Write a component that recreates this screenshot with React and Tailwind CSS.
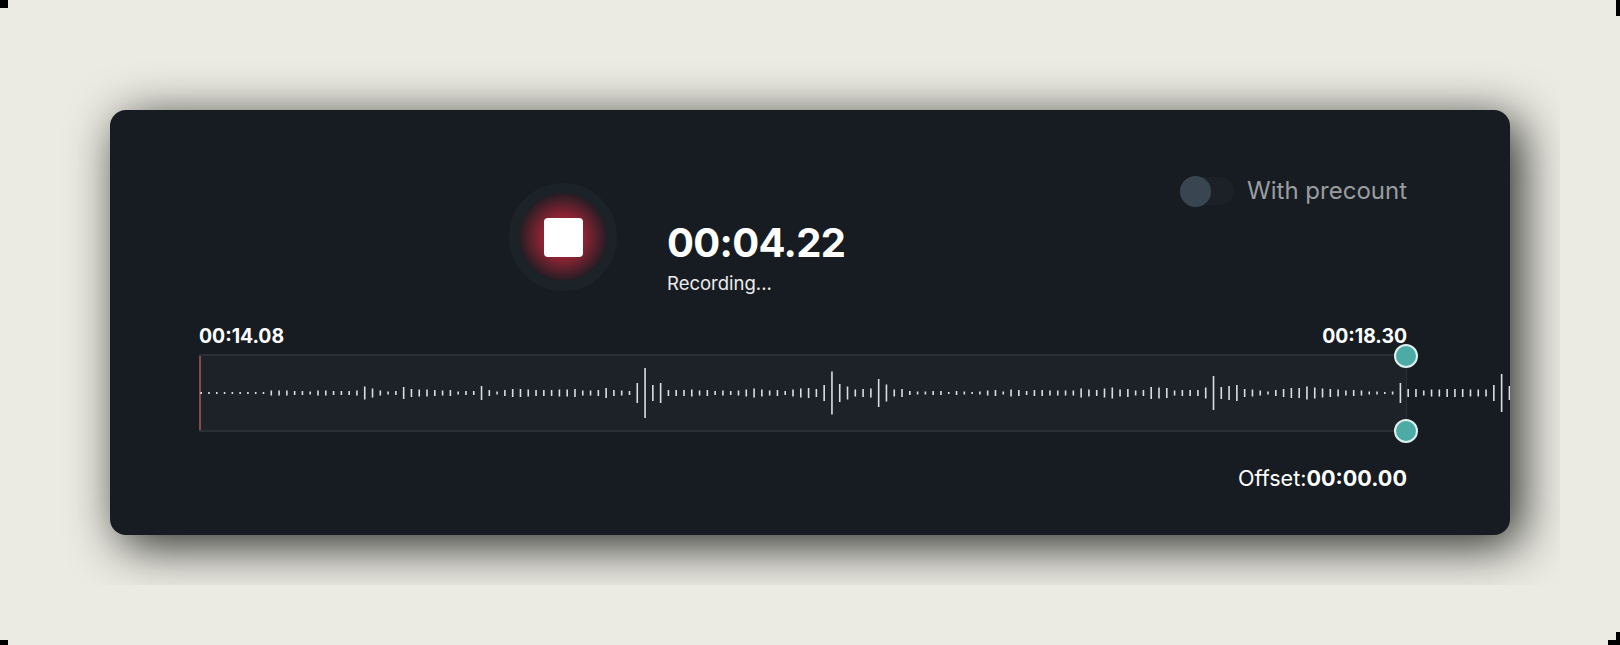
import React from 'react';

const inter = { fontFamily: 'Inter, sans-serif' };

// peak heights read off the recording, one per tick
const peaks = [
    2, 2, 2, 2, 2, 2, 2, 2, 2, 5, 5, 5, 4, 4, 3, 5, 5, 4, 4, 4, 5, 13, 9, 5, 3, 4, 12, 8, 7, 7, 6, 5, 6, 3, 4, 4,
    14, 6, 3, 6, 8, 8, 7, 6, 6, 6, 7, 7, 8, 5, 5, 6, 10, 6, 5, 4, 20, 50, 16, 20, 6, 6, 6, 7, 5, 6, 4, 5, 4, 5, 7, 9, 7,
    5, 6, 4, 7, 9, 10, 8, 16, 43, 18, 13, 7, 8, 9, 28, 17, 7, 8, 4, 3, 3, 4, 4, 2, 4, 3, 2, 3, 5, 6, 3, 7, 6, 4, 6, 6, 5, 5,
    5, 5, 9, 7, 6, 9, 11, 7, 8, 5, 6, 12, 11, 10, 5, 6, 6, 6, 11, 34, 12, 14, 16, 8, 7, 5, 3, 6, 8, 10, 10, 13, 11, 9, 8, 7, 5, 6,
    5, 3, 3, 2, 3, 20, 8, 8, 5, 7, 7, 8, 8, 8, 7, 7, 7, 16, 38, 14,
];

const Waveform = () => (
    <svg className="absolute -top-[1px] left-0" width="1312" height="76" viewBox="0 0 1312 76">
        {peaks.map((h, i) => (
            <rect key={i} x={1.4 + i * 7.787} y={38 - h / 2} width="1.6" height={h} fill="#dcdddf" />
        ))}
    </svg>
);

const Handle = ({ className }) => (
    <div className={`absolute -right-[12px] h-6 w-6 rounded-full border-2 border-[#dff1ef] bg-[#4cabA5] ${className}`} />
);

const App = () => {
    return (
        <div className="relative h-[645px] w-[1620px] overflow-hidden bg-[#ebebe3] p-[60px]" style={inter}>
            <div className="absolute left-0 top-0 h-2 w-2 bg-black" />
            <div className="absolute right-0 top-0 h-4 w-1 bg-black" />
            <div className="absolute bottom-0 left-0 h-[5px] w-2 bg-black" />
            <div className="absolute bottom-0 right-0 h-[5px] w-3 bg-black" />
            <div className="absolute bottom-[5px] right-0 h-2 w-1 bg-black" />

            <div className="h-[525px] w-[1500px] overflow-hidden p-[50px]">
                <div className="h-[425px] w-[1400px] overflow-hidden rounded-2xl bg-[#161c22] pl-[89px] pr-[103px] pt-[63px] shadow-[10px_10px_50px_rgba(0,0,0,0.85)]">
                    <div className="flex items-start justify-between">
                        <div className="ml-[310px] mt-[10px] flex items-end gap-[50px]">
                            <button className="flex h-[108px] w-[108px] items-center justify-center rounded-full border-[10px] border-[#1b2228] bg-[radial-gradient(circle,#8b2333_35%,#161c22_76%)]">
                                <span className="h-[39px] w-[39px] rounded-[4px] bg-white" />
                            </button>
                            <div className="flex flex-col">
                                <span className="text-[40px] font-bold leading-[50px] tracking-[-0.7px] text-white">00:04.22</span>
                                <span className="mt-[7px] text-[18.5px] leading-[16px] text-[#ececec]">Recording...</span>
                            </div>
                        </div>
                        <div className="mt-[1px] flex items-center gap-[13px]">
                            <div className="flex h-[28px] w-[54px] items-center rounded-full bg-[#1c2127]">
                                <span className="h-[31px] w-[31px] rounded-full bg-[#394550]" />
                            </div>
                            <span className="text-[24px] leading-[34px] text-[#9a9d9f]">With precount</span>
                        </div>
                    </div>

                    <div className="mt-[34px] flex justify-between text-[19.4px] font-bold leading-[22px] text-white">
                        <span>00:14.08</span>
                        <span>00:18.30</span>
                    </div>

                    <div className="relative mt-[7px] h-[78px] border-y-2 border-r border-[#2a3037] bg-[#1d2229]">
                        <div className="absolute left-0 top-0 h-full w-[2px] bg-[#8a4a4a]" />
                        <Waveform />
                        <Handle className="-top-[12px]" />
                        <Handle className="-bottom-[13px]" />
                    </div>

                    <div className="mt-[32px] flex items-baseline justify-end text-[21.6px] leading-[28px] text-white">
                        <span>Offset:</span>
                        <span className="font-bold">00:00.00</span>
                    </div>
                </div>
            </div>
        </div>
    );
};

export default App;
